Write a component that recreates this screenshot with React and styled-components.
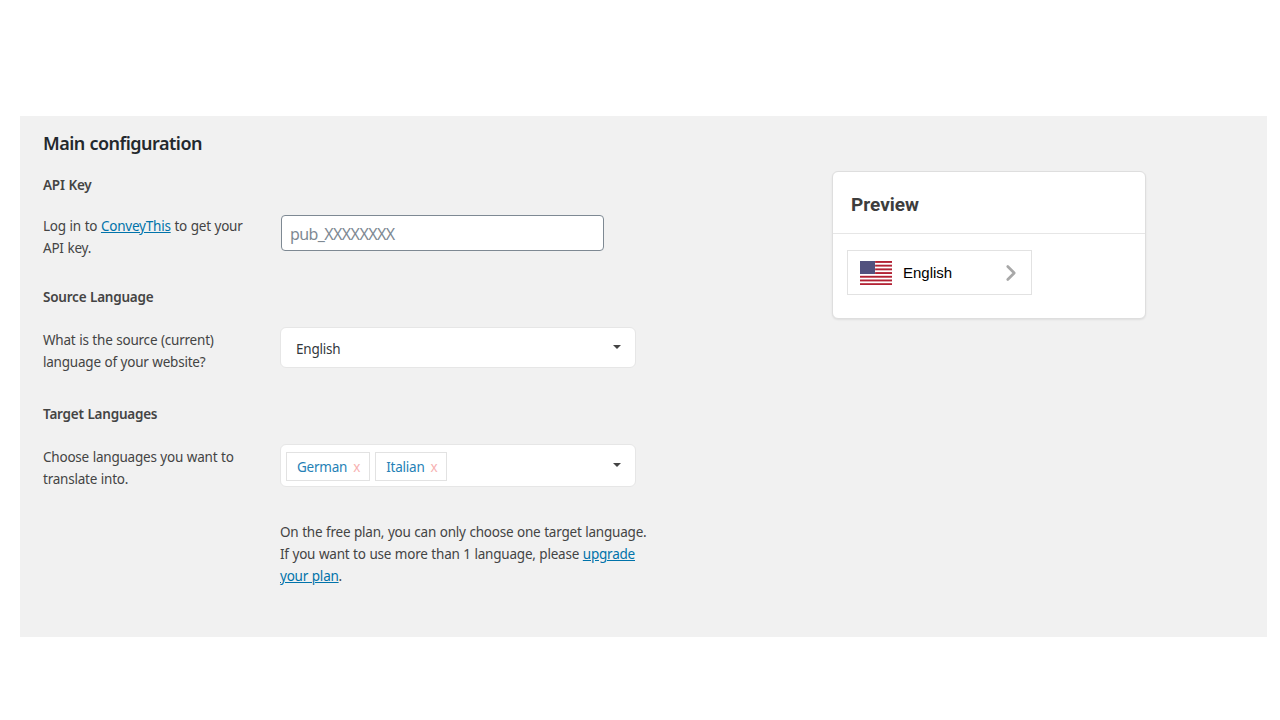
import React from 'react';
import styled, { createGlobalStyle } from 'styled-components';
import { ChevronRight } from 'lucide-react';

const GlobalStyle = createGlobalStyle`
  html, body {
    margin: 0;
    padding: 0;
    background: #fff;
  }
  body {
    font-family: "Noto Sans", "Open Sans", "Liberation Sans", sans-serif;
    font-size: 13.5px;
    letter-spacing: -0.22px;
    word-spacing: 0.4px;
    color: #444;
  }
`;

const Page = styled.div`
  width: 1280px;
  height: 720px;
  box-sizing: border-box;
  padding: 116px 13px 0 20px;
`;

const Panel = styled.div`
  height: 521px;
  box-sizing: border-box;
  background: #f1f1f1;
  padding: 13px 23px 0;
  display: flex;
`;

const MainColumn = styled.div`
  width: 789px;
  flex: none;
`;

const Title = styled.h2`
  margin: 0 0 18px;
  font-size: 18px;
  line-height: 28px;
  font-weight: 600;
  letter-spacing: -0.5px;
  color: #23282d;
`;

const SectionLabel = styled.h3`
  margin: 0 0 ${(props) => props.$gap}px;
  font-size: 13.5px;
  line-height: 20px;
  font-weight: 600;
  color: #444;
`;

const Row = styled.div`
  display: grid;
  grid-template-columns: 237px 356px;
  align-items: start;
  margin-bottom: ${(props) => props.$gap}px;
`;

const Description = styled.p`
  margin: ${(props) => props.$top}px 0 0;
  width: 210px;
  line-height: 22px;
`;

const Link = styled.a`
  color: #0073aa;
  text-decoration: underline;
`;

const KeyInput = styled.input`
  display: block;
  width: 323px;
  height: 36px;
  box-sizing: border-box;
  margin-left: 1px;
  padding: 1px 8px 0;
  border: 1px solid #7e8993;
  border-radius: 4px;
  background: #fff;
  font-family: inherit;
  font-size: 16px;
  letter-spacing: -0.6px;
  color: #32373c;

  &::placeholder {
    color: #7e8993;
    opacity: 1;
  }
`;

const SelectBox = styled.div`
  height: ${(props) => props.$height}px;
  box-sizing: border-box;
  padding: 0 14px 0 ${(props) => props.$left}px;
  display: flex;
  align-items: center;
  gap: 5px;
  background: #fff;
  border: 1px solid #e6e6e6;
  border-radius: 6px;
  color: #32373c;
`;

const SelectedValue = styled.span`
  padding-top: 2px;
`;

const Caret = styled.span`
  margin-left: auto;
  margin-top: -2px;
  width: 0;
  height: 0;
  border-style: solid;
  border-width: 4.5px 4.5px 0;
  border-color: #444 transparent transparent;
`;

const Tag = styled.span`
  height: 29px;
  box-sizing: border-box;
  margin-top: 1px;
  padding: 2px 9px 0 10px;
  display: flex;
  align-items: center;
  gap: 6px;
  background: #fff;
  border: 1px solid #e2e2e2;
  color: #2581b6;
`;

const TagRemove = styled.span`
  color: #f7b2b2;
`;

const Note = styled.p`
  margin: 0 0 0 237px;
  width: 370px;
  line-height: 22px;
`;

const Card = styled.div`
  width: 314px;
  height: 148px;
  box-sizing: border-box;
  margin-top: 42px;
  background: #fff;
  border: 1px solid #dedede;
  border-radius: 6px;
  box-shadow: 0 1px 2px rgba(0, 0, 0, 0.08);
`;

const CardHeader = styled.div`
  height: 62px;
  box-sizing: border-box;
  padding: 3px 18px 0;
  display: flex;
  align-items: center;
  border-bottom: 1px solid #e6e6e6;
  font-family: "Roboto", "Noto Sans", sans-serif;
  font-size: 19px;
  font-weight: 700;
  letter-spacing: 0;
  color: #3d3d3d;
`;

const CardBody = styled.div`
  padding: 16px 14px 0;
`;

const LanguageWidget = styled.div`
  width: 185px;
  height: 45px;
  box-sizing: border-box;
  padding: 0 7px 0 12px;
  display: flex;
  align-items: center;
  border: 1px solid #e2e2e2;
  font-family: "Liberation Sans", Arial, sans-serif;
  font-size: 15px;
  letter-spacing: 0;
  color: #000;
  background: #fff;
`;

const WidgetLabel = styled.span`
  margin-left: 11px;
  flex: 1;
`;

const Stars = () => {
  const dots = [];
  for (let y = 0.5; y < 13; y += 2) {
    for (let x = 0.5; x < 15; x += 2) {
      dots.push(<rect key={`${x}-${y}`} x={x} y={y} width="1" height="1" fill="#fff" opacity="0.45" />);
    }
  }
  return dots;
};

const UsFlag = () => (
  <svg width="32" height="24" viewBox="0 0 32 24" aria-hidden="true">
    <rect width="32" height="24" fill="#fff" />
    {[0, 1, 2, 3, 4, 5, 6].map((i) => (
      <rect key={i} y={i * 3.7} width="32" height="1.9" fill="#b22234" />
    ))}
    <rect width="15" height="13" fill="#3c3b6e" />
    <Stars />
  </svg>
);

export default function App() {
  return (
    <>
      <GlobalStyle />
      <Page>
        <Panel>
          <MainColumn>
            <Title>Main configuration</Title>
            <SectionLabel $gap={20}>API Key</SectionLabel>
            <Row $gap={28}>
              <Description $top={0}>
                Log in to <Link href="#">ConveyThis</Link> to get your API key.
              </Description>
              <KeyInput placeholder="pub_XXXXXXXX" />
            </Row>
            <SectionLabel $gap={20}>Source Language</SectionLabel>
            <Row $gap={31}>
              <Description $top={2}>What is the source (current) language of your website?</Description>
              <SelectBox $height={41} $left={15}>
                <SelectedValue>English</SelectedValue>
                <Caret />
              </SelectBox>
            </Row>
            <SectionLabel $gap={20}>Target Languages</SectionLabel>
            <Row $gap={31}>
              <Description $top={2}>Choose languages you want to translate into.</Description>
              <SelectBox $height={43} $left={5}>
                <Tag>
                  German <TagRemove>x</TagRemove>
                </Tag>
                <Tag>
                  Italian <TagRemove>x</TagRemove>
                </Tag>
                <Caret />
              </SelectBox>
            </Row>
            <Note>
              On the free plan, you can only choose one target language.
              <br />
              If you want to use more than 1 language, please <Link href="#">upgrade your plan</Link>.
            </Note>
          </MainColumn>
          <Card>
            <CardHeader>Preview</CardHeader>
            <CardBody>
              <LanguageWidget>
                <UsFlag />
                <WidgetLabel>English</WidgetLabel>
                <ChevronRight size={26} color="#a8a8a8" strokeWidth={2.5} />
              </LanguageWidget>
            </CardBody>
          </Card>
        </Panel>
      </Page>
    </>
  );
}
